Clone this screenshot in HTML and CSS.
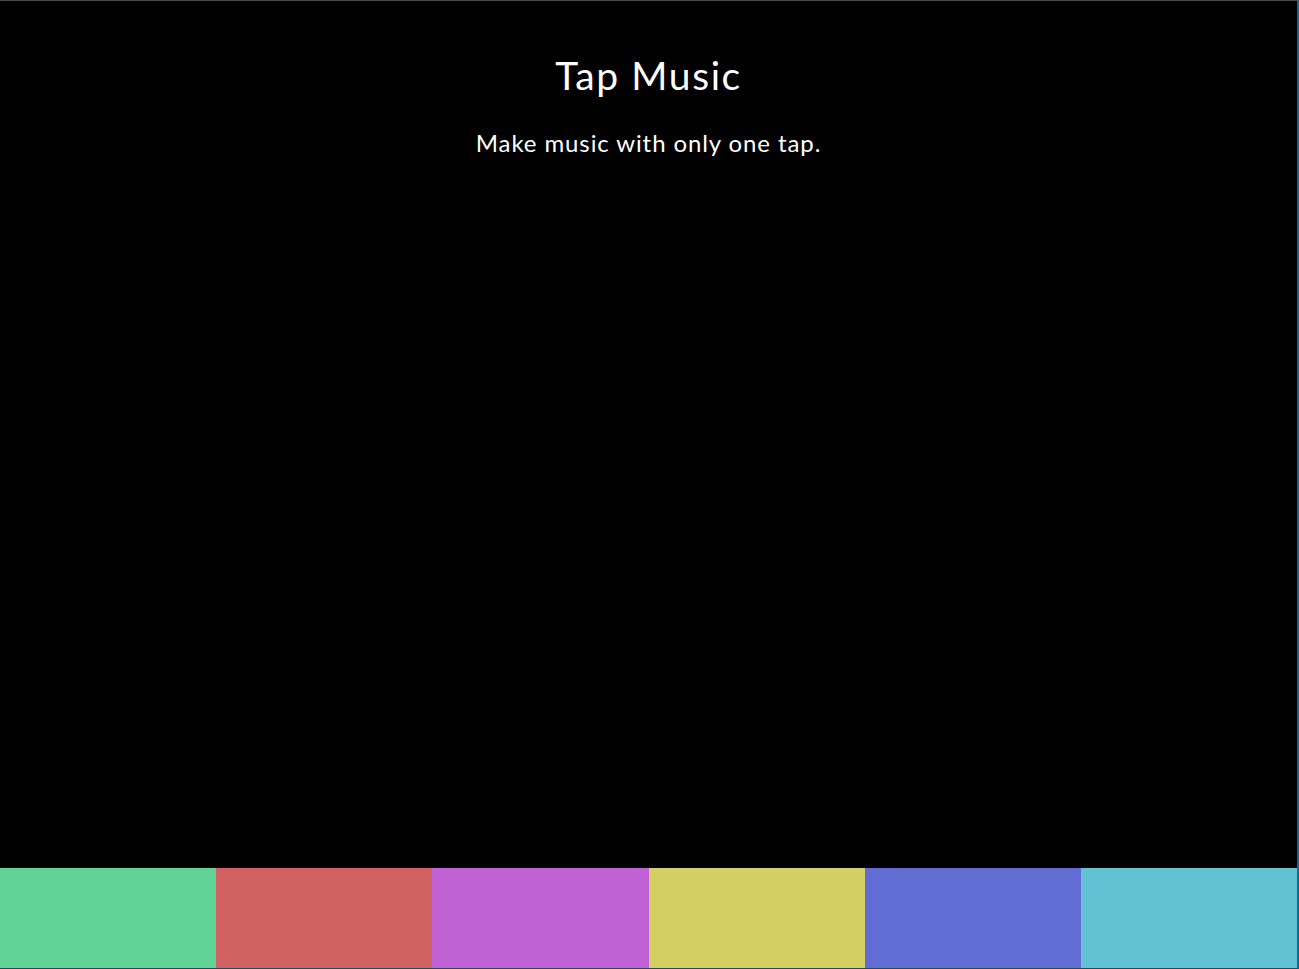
FILE: index.html
```html
<!DOCTYPE html>
<html lang="en">
<head>
<meta charset="utf-8">
<title>Tap Music</title>
<link rel="stylesheet" href="styles.css">
</head>
<body>
<div class="frame">
  <header class="intro">
    <h1 class="title">Tap Music</h1>
    <p class="tagline">Make music with only one tap.</p>
  </header>
  <main class="stage"></main>
  <footer class="pads">
    <div class="pad pad-green"></div>
    <div class="pad pad-red"></div>
    <div class="pad pad-purple"></div>
    <div class="pad pad-yellow"></div>
    <div class="pad pad-blue"></div>
    <div class="pad pad-cyan"></div>
  </footer>
</div>
</body>
</html>
```
FILE: styles.css
```css
html, body {
  margin: 0;
  padding: 0;
  height: 100%;
  background: #000;
}
body {
  font-family: "Lato", "Open Sans", sans-serif;
  color: #fff;
}
.frame {
  box-sizing: border-box;
  height: 100vh;
  display: flex;
  flex-direction: column;
  border-top: 1px solid #4a4a4a;
  border-right: 2px solid #0f6a96;
  border-bottom: 1px solid #1d4e5e;
  background: #000;
}
.intro {
  text-align: center;
  padding-top: 51px;
}
.title {
  margin: 0;
  font-size: 39px;
  font-weight: 400;
  line-height: 46px;
  letter-spacing: 1.6px;
}
.tagline {
  margin: 30px 0 0;
  font-size: 24px;
  font-weight: 400;
  line-height: 30px;
  letter-spacing: 0.9px;
}
.stage {
  flex: 1;
}
.pads {
  display: flex;
  height: 100px;
}
.pad {
  flex: 1;
}
.pad-green { background: #62d396; }
.pad-red { background: #d26161; }
.pad-purple { background: #c062d3; }
.pad-yellow { background: #d3cf62; }
.pad-blue { background: #626dd3; }
.pad-cyan { background: #62c1d3; }
```
